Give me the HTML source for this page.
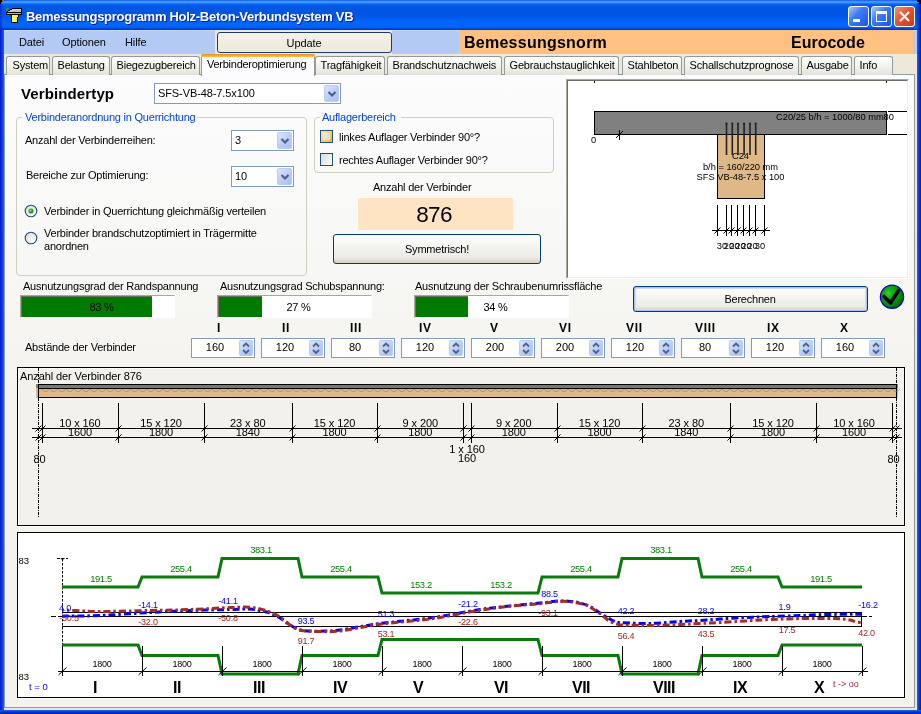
<!DOCTYPE html>
<html><head><meta charset="utf-8"><style>
html,body{margin:0;padding:0}
body{width:921px;height:714px;overflow:hidden;position:relative;background:#0a3ad8;font-family:"Liberation Sans", sans-serif;}
div{box-sizing:border-box}
.a{position:absolute}
.t{position:absolute;white-space:nowrap;font-family:"Liberation Sans", sans-serif;}
.tab{position:absolute;top:56px;height:19px;border:1px solid #919b9c;border-bottom:none;border-radius:3px 3px 0 0;background:linear-gradient(#ffffff,#f0f0ea 60%,#e3e2da);}
.grp{position:absolute;border:1px solid #d0d0bf;border-radius:4px;}
.combo{position:absolute;border:1px solid #7f9db9;background:#fff;}
.ddb{position:absolute;border-radius:2px;background:linear-gradient(135deg,#dce6fc,#b7cbf7 60%,#a8bdf5);border:1px solid #bccbf2}
.xpbtn{position:absolute;border:1px solid #003c74;border-radius:3px;background:linear-gradient(#ffffff,#f4f4f0 40%,#ecebe6 80%,#d6d0c5);}
.spin{position:absolute;width:64px;height:20px;border:1px solid #7f9db9;background:#fff;}
.sb{position:absolute;left:47px;top:1px;width:14px;height:16px;border-radius:2px;background:linear-gradient(135deg,#dce6fc,#b7cbf7 60%,#a8bdf5);border:1px solid #bccbf2}
.pb{position:absolute;border-top:2px solid #aca899;border-left:2px solid #aca899;border-right:1px solid #f1efe2;border-bottom:1px solid #f1efe2;}
</style></head><body><div style="position:absolute;left:0;top:0;width:921px;height:714px;overflow:hidden;will-change:transform">
<div class="a" style="left:0;top:0;width:921px;height:30px;border-radius:7px 7px 0 0;background:linear-gradient(#0040d8 0px,#3d95ff 1px,#3d95ff 2.5px,#0a68f2 4px,#0058e6 6px,#0055e3 12px,#0058e8 17px,#0064f8 21px,#0066ff 26px,#0058ea 28px,#0036c8 29.5px)"></div>
<svg class="a" style="left:0;top:0" width="30" height="30" shape-rendering="crispEdges">
<rect x="0" y="0" width="4" height="1" fill="#000"/><rect x="0" y="1" width="2" height="1" fill="#000"/><rect x="0" y="2" width="1" height="2" fill="#000"/>
<rect x="2" y="0" width="2" height="1" fill="#8a7020"/>
<rect x="6" y="8" width="3" height="4" fill="#1a8a7a"/>
<rect x="6" y="14" width="3" height="1" fill="#1a8a7a"/>
<rect x="12" y="8" width="10" height="1" fill="#000"/>
<rect x="21" y="8" width="1" height="7" fill="#000"/>
<rect x="10" y="9" width="2" height="1" fill="#000"/>
<rect x="8" y="10" width="2" height="1" fill="#000"/>
<rect x="7" y="11" width="1" height="1" fill="#000"/>
<rect x="12" y="9" width="9" height="1" fill="#d4d0c8"/>
<rect x="10" y="10" width="11" height="1" fill="#ccc8c0"/>
<rect x="8" y="11" width="13" height="1" fill="#c4c0b8"/>
<rect x="6" y="12" width="16" height="1" fill="#000"/>
<rect x="7" y="13" width="14" height="1" fill="#bcb8b0"/>
<rect x="6" y="13" width="1" height="1" fill="#000"/>
<rect x="6" y="14" width="16" height="1" fill="#000"/>
<rect x="11" y="15" width="8" height="2" fill="#000"/>
<rect x="11" y="17" width="7" height="6" fill="#000"/>
<rect x="12" y="15" width="6" height="2" fill="#ffff33"/>
<rect x="12" y="17" width="5" height="5" fill="#ffff33"/>
</svg>
<div class="t" style="left:26px;top:9px;font-size:13px;line-height:16px;font-weight:bold;color:#fff;letter-spacing:-0.28px;text-shadow:1px 1px 0 #0a1f9c">Bemessungsprogramm Holz-Beton-Verbundsystem VB</div>
<div class="a" style="left:848px;top:6px;width:21px;height:21px;border:1px solid #fff;border-radius:3px;background:linear-gradient(135deg,#ffffff -30%,#3d7cf5 40%,#1c55e2 100%)"></div>
<div class="a" style="left:853px;top:19px;width:7px;height:3px;background:#fff"></div>
<div class="a" style="left:871px;top:6px;width:21px;height:21px;border:1px solid #fff;border-radius:3px;background:linear-gradient(135deg,#ffffff -30%,#3d7cf5 40%,#1c55e2 100%)"></div>
<div class="a" style="left:876px;top:11px;width:11px;height:11px;border:1px solid #fff;border-top:3px solid #fff"></div>
<div class="a" style="left:894px;top:6px;width:21px;height:21px;border:1px solid #fff;border-radius:3px;background:linear-gradient(135deg,#ffb6a3 -30%,#e5542f 45%,#c83c14 100%)"></div>
<svg class="a" style="left:894px;top:6px" width="21" height="21"><path d="M6 6 L15 15 M15 6 L6 15" stroke="#fff" stroke-width="2.2"/></svg>
<div class="a" style="left:916px;top:3px;width:5px;height:27px;background:linear-gradient(90deg,rgba(0,60,230,0),#0040d8 40%,#0028b0 80%,#001a90)"></div>
<div class="a" style="left:0px;top:4px;width:3px;height:26px;background:linear-gradient(90deg,#0030c8,rgba(0,80,230,0))"></div>
<div class="a" style="left:917px;top:0;width:4px;height:2px;background:#000"></div><div class="a" style="left:919px;top:2px;width:2px;height:2px;background:#000"></div>
<div class="a" style="left:0;top:30px;width:4px;height:684px;background:linear-gradient(90deg,#0019cf,#0831d9 40%,#166aee)"></div>
<div class="a" style="left:917px;top:30px;width:4px;height:684px;background:linear-gradient(90deg,#166aee,#0831d9 60%,#001ea0)"></div>
<div class="a" style="left:0;top:710px;width:921px;height:4px;background:linear-gradient(#166aee,#0831d9 50%,#001ea0)"></div>
<div class="a" style="left:4px;top:30px;width:913px;height:24px;background:#b3cbf4;border-top:1px solid #c8daf8"></div>
<div class="t" style="left:19px;top:37px;font-size:11px;line-height:11px;height:11px;color:#000;font-weight:normal;letter-spacing:-0.1px;">Datei</div>
<div class="t" style="left:62px;top:37px;font-size:11px;line-height:11px;height:11px;color:#000;font-weight:normal;letter-spacing:-0.1px;">Optionen</div>
<div class="t" style="left:125px;top:37px;font-size:11px;line-height:11px;height:11px;color:#000;font-weight:normal;letter-spacing:-0.1px;">Hilfe</div>
<div class="a" style="left:215px;top:30px;width:177px;height:24px;background:#ece9d8"></div>
<div class="xpbtn" style="left:217px;top:32px;width:175px;height:21px;border-color:#1a3b74;background:linear-gradient(#f5f3ea,#ece9d8)"></div>
<div class="t" style="left:204.0px;width:200px;text-align:center;top:38px;font-size:11px;line-height:11px;height:11px;color:#000;font-weight:normal;letter-spacing:-0.1px;">Update</div>
<div class="a" style="left:459px;top:30px;width:454px;height:24px;background:#ffc080"></div>
<div class="t" style="left:464px;top:35px;font-size:16px;line-height:16px;height:16px;color:#000;font-weight:bold;letter-spacing:0.25px;">Bemessungsnorm</div>
<div class="t" style="left:791px;top:35px;font-size:16px;line-height:16px;height:16px;color:#000;font-weight:bold;letter-spacing:0px;">Eurocode</div>
<div class="a" style="left:4px;top:54px;width:913px;height:656px;background:#ece9d8"></div>
<div class="a" style="left:4px;top:74px;width:911px;height:634px;border:1px solid #919b9c;border-left-color:#919b9c;background:linear-gradient(#fcfcfe 0px,#f9f9f8 120px,#f4f3ee 320px,#f3f2ed 634px)"></div>
<div class="tab" style="left:6px;width:44px"></div>
<div class="t" style="left:12.5px;top:60px;font-size:11px;line-height:11px;height:11px;color:#000;font-weight:normal;letter-spacing:-0.18px;">System</div>
<div class="tab" style="left:52px;width:58px"></div>
<div class="t" style="left:57.5px;top:60px;font-size:11px;line-height:11px;height:11px;color:#000;font-weight:normal;letter-spacing:-0.18px;">Belastung</div>
<div class="tab" style="left:111px;width:89px"></div>
<div class="t" style="left:116.5px;top:60px;font-size:11px;line-height:11px;height:11px;color:#000;font-weight:normal;letter-spacing:-0.18px;">Biegezugbereich</div>
<div class="tab" style="left:315px;width:70px"></div>
<div class="t" style="left:320.5px;top:60px;font-size:11px;line-height:11px;height:11px;color:#000;font-weight:normal;letter-spacing:-0.18px;">Tragfähigkeit</div>
<div class="tab" style="left:387px;width:115px"></div>
<div class="t" style="left:392.5px;top:60px;font-size:11px;line-height:11px;height:11px;color:#000;font-weight:normal;letter-spacing:-0.18px;">Brandschutznachweis</div>
<div class="tab" style="left:504px;width:115px"></div>
<div class="t" style="left:509.5px;top:60px;font-size:11px;line-height:11px;height:11px;color:#000;font-weight:normal;letter-spacing:-0.18px;">Gebrauchstauglichkeit</div>
<div class="tab" style="left:622px;width:60px"></div>
<div class="t" style="left:627.5px;top:60px;font-size:11px;line-height:11px;height:11px;color:#000;font-weight:normal;letter-spacing:-0.18px;">Stahlbeton</div>
<div class="tab" style="left:684px;width:115px"></div>
<div class="t" style="left:689.5px;top:60px;font-size:11px;line-height:11px;height:11px;color:#000;font-weight:normal;letter-spacing:-0.18px;">Schallschutzprognose</div>
<div class="tab" style="left:801px;width:51px"></div>
<div class="t" style="left:806.5px;top:60px;font-size:11px;line-height:11px;height:11px;color:#000;font-weight:normal;letter-spacing:-0.18px;">Ausgabe</div>
<div class="tab" style="left:854px;width:39px"></div>
<div class="t" style="left:859.5px;top:60px;font-size:11px;line-height:11px;height:11px;color:#000;font-weight:normal;letter-spacing:-0.18px;">Info</div>
<div class="a" style="left:201px;top:54px;width:114px;height:22px;border:1px solid #919b9c;border-bottom:none;border-radius:3px 3px 0 0;background:#fcfcfe"></div>
<div class="a" style="left:201px;top:54px;width:114px;height:3px;border-radius:3px 3px 0 0;background:linear-gradient(#e68b2c,#ffc73c)"></div>
<div class="t" style="left:207px;top:59px;font-size:11px;line-height:11px;height:11px;color:#000;font-weight:normal;letter-spacing:-0.26px;">Verbinderoptimierung</div>
<div class="t" style="left:21px;top:85.5px;font-size:15px;line-height:15px;height:15px;color:#000;font-weight:bold;letter-spacing:0.12px;">Verbindertyp</div>
<div class="combo" style="left:154px;top:83px;width:187px;height:21px"></div>
<div class="ddb" style="left:324px;top:85px;width:15px;height:17px"></div>
<svg class="a" style="left:326.5px;top:89.5px" width="10" height="8"><path d="M1.5 2 L5 5.5 L8.5 2" fill="none" stroke="#4d6185" stroke-width="2.2"/></svg>
<div class="t" style="left:158px;top:88px;font-size:11px;line-height:11px;height:11px;color:#000;font-weight:normal;letter-spacing:-0.1px;">SFS-VB-48-7.5x100</div>
<div class="grp" style="left:16px;top:117px;width:291px;height:159px"></div>
<div class="a" style="left:22px;top:110px;width:175px;height:12px;background:#fbfbfc"></div>
<div class="t" style="left:25px;top:112px;font-size:11px;line-height:11px;height:11px;color:#0046d5;font-weight:normal;letter-spacing:-0.22px;">Verbinderanordnung in Querrichtung</div>
<div class="t" style="left:25px;top:135px;font-size:11px;line-height:11px;height:11px;color:#000;font-weight:normal;letter-spacing:-0.22px;">Anzahl der Verbinderreihen:</div>
<div class="combo" style="left:231px;top:130px;width:63px;height:21px"></div>
<div class="ddb" style="left:277px;top:132px;width:15px;height:17px"></div>
<svg class="a" style="left:279.5px;top:136.5px" width="10" height="8"><path d="M1.5 2 L5 5.5 L8.5 2" fill="none" stroke="#4d6185" stroke-width="2.2"/></svg>
<div class="t" style="left:235px;top:135px;font-size:11px;line-height:11px;height:11px;color:#000;font-weight:normal;letter-spacing:-0.1px;">3</div>
<div class="t" style="left:26px;top:170px;font-size:11px;line-height:11px;height:11px;color:#000;font-weight:normal;letter-spacing:-0.22px;">Bereiche zur Optimierung:</div>
<div class="combo" style="left:231px;top:166px;width:63px;height:21px"></div>
<div class="ddb" style="left:277px;top:168px;width:15px;height:17px"></div>
<svg class="a" style="left:279.5px;top:172.5px" width="10" height="8"><path d="M1.5 2 L5 5.5 L8.5 2" fill="none" stroke="#4d6185" stroke-width="2.2"/></svg>
<div class="t" style="left:235px;top:171px;font-size:11px;line-height:11px;height:11px;color:#000;font-weight:normal;letter-spacing:-0.1px;">10</div>
<svg class="a" style="left:24px;top:204px" width="14" height="14"><defs><radialGradient id="rg31211" cx="0.7" cy="0.7" r="0.8"><stop offset="0" stop-color="#fff"/><stop offset="1" stop-color="#dcdcd6"/></radialGradient></defs><circle cx="7" cy="7" r="5.8" fill="url(#rg31211)" stroke="#1c5180" stroke-width="1.1"/><circle cx="7" cy="7" r="2.6" fill="#21a121"/><circle cx="6.4" cy="6.4" r="1" fill="#8fe58f"/></svg>
<div class="t" style="left:44px;top:206px;font-size:11px;line-height:11px;height:11px;color:#000;font-weight:normal;letter-spacing:-0.22px;">Verbinder in Querrichtung gleichmäßig verteilen</div>
<svg class="a" style="left:24px;top:231px" width="14" height="14"><defs><radialGradient id="rg31238" cx="0.7" cy="0.7" r="0.8"><stop offset="0" stop-color="#fff"/><stop offset="1" stop-color="#dcdcd6"/></radialGradient></defs><circle cx="7" cy="7" r="5.8" fill="url(#rg31238)" stroke="#1c5180" stroke-width="1.1"/></svg>
<div class="t" style="left:44px;top:227.5px;font-size:11px;line-height:11px;height:11px;color:#000;font-weight:normal;letter-spacing:-0.22px;">Verbinder brandschutzoptimiert in Trägermitte</div>
<div class="t" style="left:44px;top:240.5px;font-size:11px;line-height:11px;height:11px;color:#000;font-weight:normal;letter-spacing:-0.22px;">anordnen</div>
<div class="grp" style="left:314px;top:117px;width:240px;height:56px"></div>
<div class="a" style="left:320px;top:110px;width:81px;height:12px;background:#fbfbfc"></div>
<div class="t" style="left:322px;top:112px;font-size:11px;line-height:11px;height:11px;color:#0046d5;font-weight:normal;letter-spacing:-0.22px;">Auflagerbereich</div>
<div class="a" style="left:320px;top:130px;width:13px;height:13px;border:1px solid #1c5180;background:linear-gradient(135deg,#fde6a8,#f8b33f)"></div>
<div class="a" style="left:323px;top:133px;width:7px;height:7px;background:linear-gradient(135deg,#e8e8e4,#dcdcd6)"></div>
<div class="t" style="left:339px;top:132px;font-size:11px;line-height:11px;height:11px;color:#000;font-weight:normal;letter-spacing:-0.22px;">linkes Auflager Verbinder 90°?</div>
<div class="a" style="left:320px;top:153px;width:13px;height:13px;border:1px solid #1c5180;background:linear-gradient(135deg,#dcdcd7,#fbfbfa)"></div>
<div class="t" style="left:339px;top:155px;font-size:11px;line-height:11px;height:11px;color:#000;font-weight:normal;letter-spacing:-0.22px;">rechtes Auflager Verbinder 90°?</div>
<div class="t" style="left:373px;top:182px;font-size:11px;line-height:11px;height:11px;color:#000;font-weight:normal;letter-spacing:-0.22px;">Anzahl der Verbinder</div>
<div class="a" style="left:358px;top:198px;width:155px;height:32px;background:#ffe4c4"></div>
<div class="t" style="left:334.0px;width:200px;text-align:center;top:204px;font-size:22.5px;line-height:22.5px;height:22.5px;color:#000;font-weight:normal;letter-spacing:-0.6px;">876</div>
<div class="xpbtn" style="left:333px;top:234px;width:208px;height:30px"></div>
<div class="t" style="left:337.0px;width:200px;text-align:center;top:244px;font-size:11px;line-height:11px;height:11px;color:#000;font-weight:normal;letter-spacing:-0.22px;">Symmetrisch!</div>
<div class="t" style="left:23px;top:281px;font-size:11px;line-height:11px;height:11px;color:#000;font-weight:normal;letter-spacing:-0.22px;">Ausnutzungsgrad der Randspannung</div>
<div class="a" style="left:20px;top:295px;width:155px;height:23px;background:#fff;border-top:1px solid #aca899;border-left:1px solid #aca899;border-right:1px solid #fff;border-bottom:1px solid #fff"></div>
<div class="a" style="left:21px;top:296px;width:131px;height:21px;background:#007a00;border-top:1px solid #716f64;border-left:1px solid #716f64"></div>
<div class="t" style="left:1.5px;width:200px;text-align:center;top:302px;font-size:11px;line-height:11px;height:11px;color:#000;font-weight:normal;letter-spacing:-0.22px;">83 %</div>
<div class="t" style="left:220px;top:281px;font-size:11px;line-height:11px;height:11px;color:#000;font-weight:normal;letter-spacing:-0.22px;">Ausnutzungsgrad Schubspannung:</div>
<div class="a" style="left:217px;top:295px;width:155px;height:23px;background:#fff;border-top:1px solid #aca899;border-left:1px solid #aca899;border-right:1px solid #fff;border-bottom:1px solid #fff"></div>
<div class="a" style="left:218px;top:296px;width:44px;height:21px;background:#007a00;border-top:1px solid #716f64;border-left:1px solid #716f64"></div>
<div class="t" style="left:198.5px;width:200px;text-align:center;top:302px;font-size:11px;line-height:11px;height:11px;color:#000;font-weight:normal;letter-spacing:-0.22px;">27 %</div>
<div class="t" style="left:415px;top:281px;font-size:11px;line-height:11px;height:11px;color:#000;font-weight:normal;letter-spacing:-0.22px;">Ausnutzung der Schraubenumrissfläche</div>
<div class="a" style="left:414px;top:295px;width:155px;height:23px;background:#fff;border-top:1px solid #aca899;border-left:1px solid #aca899;border-right:1px solid #fff;border-bottom:1px solid #fff"></div>
<div class="a" style="left:415px;top:296px;width:53px;height:21px;background:#007a00;border-top:1px solid #716f64;border-left:1px solid #716f64"></div>
<div class="t" style="left:395.5px;width:200px;text-align:center;top:302px;font-size:11px;line-height:11px;height:11px;color:#000;font-weight:normal;letter-spacing:-0.22px;">34 %</div>
<div class="xpbtn" style="left:633px;top:286px;width:235px;height:26px;box-shadow:inset 0 0 0 1px #a9c2f0, inset 0 0 0 2px #cfdcf5"></div>
<div class="t" style="left:650.0px;width:200px;text-align:center;top:294px;font-size:11px;line-height:11px;height:11px;color:#000;font-weight:normal;letter-spacing:-0.22px;">Berechnen</div>
<svg class="a" style="left:878px;top:283px" width="28" height="28" viewBox="878 283 28 28">
<defs><radialGradient id="chk" cx="0.35" cy="0.35" r="0.75"><stop offset="0" stop-color="#3fd03f"/><stop offset="0.25" stop-color="#10b010"/><stop offset="0.7" stop-color="#008a00"/><stop offset="1" stop-color="#005800"/></radialGradient></defs>
<circle cx="892" cy="296.8" r="11.6" fill="url(#chk)" stroke="#0000d0" stroke-width="1.3"/>
<path d="M884 296.5 L890.5 303 L898.5 290.5" fill="none" stroke="#000" stroke-width="3.6" stroke-linejoin="round" stroke-linecap="round"/>
</svg>
<div class="t" style="left:25px;top:342px;font-size:11px;line-height:11px;height:11px;color:#000;font-weight:normal;letter-spacing:-0.22px;">Abstände der Verbinder</div>
<div class="t" style="left:217px;top:322px;font-size:12px;line-height:12px;height:12px;color:#000;font-weight:bold;letter-spacing:0.7px;">I</div>
<div class="spin" style="left:191px;top:338px"></div>
<div class="a" style="left:239px;top:340px;width:14px;height:16px;border-radius:2px;background:linear-gradient(135deg,#dce6fc,#b7cbf7 60%,#a8bdf5);border:1px solid #bccbf2"></div>
<svg class="a" style="left:240px;top:341px" width="12" height="14"><path d="M3 5.5 L6 2.5 L9 5.5 M3 9 L6 12 L9 9" fill="none" stroke="#4d6185" stroke-width="1.8"/></svg>
<div class="t" style="left:115.0px;width:200px;text-align:center;top:342px;font-size:11px;line-height:11px;height:11px;color:#000;font-weight:normal;letter-spacing:0px;">160</div>
<div class="t" style="left:282px;top:322px;font-size:12px;line-height:12px;height:12px;color:#000;font-weight:bold;letter-spacing:0.7px;">II</div>
<div class="spin" style="left:261px;top:338px"></div>
<div class="a" style="left:309px;top:340px;width:14px;height:16px;border-radius:2px;background:linear-gradient(135deg,#dce6fc,#b7cbf7 60%,#a8bdf5);border:1px solid #bccbf2"></div>
<svg class="a" style="left:310px;top:341px" width="12" height="14"><path d="M3 5.5 L6 2.5 L9 5.5 M3 9 L6 12 L9 9" fill="none" stroke="#4d6185" stroke-width="1.8"/></svg>
<div class="t" style="left:185.0px;width:200px;text-align:center;top:342px;font-size:11px;line-height:11px;height:11px;color:#000;font-weight:normal;letter-spacing:0px;">120</div>
<div class="t" style="left:350px;top:322px;font-size:12px;line-height:12px;height:12px;color:#000;font-weight:bold;letter-spacing:0.7px;">III</div>
<div class="spin" style="left:331px;top:338px"></div>
<div class="a" style="left:379px;top:340px;width:14px;height:16px;border-radius:2px;background:linear-gradient(135deg,#dce6fc,#b7cbf7 60%,#a8bdf5);border:1px solid #bccbf2"></div>
<svg class="a" style="left:380px;top:341px" width="12" height="14"><path d="M3 5.5 L6 2.5 L9 5.5 M3 9 L6 12 L9 9" fill="none" stroke="#4d6185" stroke-width="1.8"/></svg>
<div class="t" style="left:255.0px;width:200px;text-align:center;top:342px;font-size:11px;line-height:11px;height:11px;color:#000;font-weight:normal;letter-spacing:0px;">80</div>
<div class="t" style="left:419px;top:322px;font-size:12px;line-height:12px;height:12px;color:#000;font-weight:bold;letter-spacing:0.7px;">IV</div>
<div class="spin" style="left:401px;top:338px"></div>
<div class="a" style="left:449px;top:340px;width:14px;height:16px;border-radius:2px;background:linear-gradient(135deg,#dce6fc,#b7cbf7 60%,#a8bdf5);border:1px solid #bccbf2"></div>
<svg class="a" style="left:450px;top:341px" width="12" height="14"><path d="M3 5.5 L6 2.5 L9 5.5 M3 9 L6 12 L9 9" fill="none" stroke="#4d6185" stroke-width="1.8"/></svg>
<div class="t" style="left:325.0px;width:200px;text-align:center;top:342px;font-size:11px;line-height:11px;height:11px;color:#000;font-weight:normal;letter-spacing:0px;">120</div>
<div class="t" style="left:490px;top:322px;font-size:12px;line-height:12px;height:12px;color:#000;font-weight:bold;letter-spacing:0.7px;">V</div>
<div class="spin" style="left:471px;top:338px"></div>
<div class="a" style="left:519px;top:340px;width:14px;height:16px;border-radius:2px;background:linear-gradient(135deg,#dce6fc,#b7cbf7 60%,#a8bdf5);border:1px solid #bccbf2"></div>
<svg class="a" style="left:520px;top:341px" width="12" height="14"><path d="M3 5.5 L6 2.5 L9 5.5 M3 9 L6 12 L9 9" fill="none" stroke="#4d6185" stroke-width="1.8"/></svg>
<div class="t" style="left:395.0px;width:200px;text-align:center;top:342px;font-size:11px;line-height:11px;height:11px;color:#000;font-weight:normal;letter-spacing:0px;">200</div>
<div class="t" style="left:559px;top:322px;font-size:12px;line-height:12px;height:12px;color:#000;font-weight:bold;letter-spacing:0.7px;">VI</div>
<div class="spin" style="left:541px;top:338px"></div>
<div class="a" style="left:589px;top:340px;width:14px;height:16px;border-radius:2px;background:linear-gradient(135deg,#dce6fc,#b7cbf7 60%,#a8bdf5);border:1px solid #bccbf2"></div>
<svg class="a" style="left:590px;top:341px" width="12" height="14"><path d="M3 5.5 L6 2.5 L9 5.5 M3 9 L6 12 L9 9" fill="none" stroke="#4d6185" stroke-width="1.8"/></svg>
<div class="t" style="left:465.0px;width:200px;text-align:center;top:342px;font-size:11px;line-height:11px;height:11px;color:#000;font-weight:normal;letter-spacing:0px;">200</div>
<div class="t" style="left:626px;top:322px;font-size:12px;line-height:12px;height:12px;color:#000;font-weight:bold;letter-spacing:0.7px;">VII</div>
<div class="spin" style="left:611px;top:338px"></div>
<div class="a" style="left:659px;top:340px;width:14px;height:16px;border-radius:2px;background:linear-gradient(135deg,#dce6fc,#b7cbf7 60%,#a8bdf5);border:1px solid #bccbf2"></div>
<svg class="a" style="left:660px;top:341px" width="12" height="14"><path d="M3 5.5 L6 2.5 L9 5.5 M3 9 L6 12 L9 9" fill="none" stroke="#4d6185" stroke-width="1.8"/></svg>
<div class="t" style="left:535.0px;width:200px;text-align:center;top:342px;font-size:11px;line-height:11px;height:11px;color:#000;font-weight:normal;letter-spacing:0px;">120</div>
<div class="t" style="left:695px;top:322px;font-size:12px;line-height:12px;height:12px;color:#000;font-weight:bold;letter-spacing:0.7px;">VIII</div>
<div class="spin" style="left:681px;top:338px"></div>
<div class="a" style="left:729px;top:340px;width:14px;height:16px;border-radius:2px;background:linear-gradient(135deg,#dce6fc,#b7cbf7 60%,#a8bdf5);border:1px solid #bccbf2"></div>
<svg class="a" style="left:730px;top:341px" width="12" height="14"><path d="M3 5.5 L6 2.5 L9 5.5 M3 9 L6 12 L9 9" fill="none" stroke="#4d6185" stroke-width="1.8"/></svg>
<div class="t" style="left:605.0px;width:200px;text-align:center;top:342px;font-size:11px;line-height:11px;height:11px;color:#000;font-weight:normal;letter-spacing:0px;">80</div>
<div class="t" style="left:767px;top:322px;font-size:12px;line-height:12px;height:12px;color:#000;font-weight:bold;letter-spacing:0.7px;">IX</div>
<div class="spin" style="left:751px;top:338px"></div>
<div class="a" style="left:799px;top:340px;width:14px;height:16px;border-radius:2px;background:linear-gradient(135deg,#dce6fc,#b7cbf7 60%,#a8bdf5);border:1px solid #bccbf2"></div>
<svg class="a" style="left:800px;top:341px" width="12" height="14"><path d="M3 5.5 L6 2.5 L9 5.5 M3 9 L6 12 L9 9" fill="none" stroke="#4d6185" stroke-width="1.8"/></svg>
<div class="t" style="left:675.0px;width:200px;text-align:center;top:342px;font-size:11px;line-height:11px;height:11px;color:#000;font-weight:normal;letter-spacing:0px;">120</div>
<div class="t" style="left:840px;top:322px;font-size:12px;line-height:12px;height:12px;color:#000;font-weight:bold;letter-spacing:0.7px;">X</div>
<div class="spin" style="left:821px;top:338px"></div>
<div class="a" style="left:869px;top:340px;width:14px;height:16px;border-radius:2px;background:linear-gradient(135deg,#dce6fc,#b7cbf7 60%,#a8bdf5);border:1px solid #bccbf2"></div>
<svg class="a" style="left:870px;top:341px" width="12" height="14"><path d="M3 5.5 L6 2.5 L9 5.5 M3 9 L6 12 L9 9" fill="none" stroke="#4d6185" stroke-width="1.8"/></svg>
<div class="t" style="left:745.0px;width:200px;text-align:center;top:342px;font-size:11px;line-height:11px;height:11px;color:#000;font-weight:normal;letter-spacing:0px;">160</div>
<div class="a" style="left:566px;top:79px;width:343px;height:200px;background:#fff;border-top:1px solid #aca899;border-left:1px solid #aca899;border-right:1px solid #fff;border-bottom:1px solid #fff"></div>
<div class="a" style="left:567px;top:80px;width:341px;height:198px;border-top:1px solid #716f64;border-left:1px solid #716f64;border-right:1px solid #f1efe2;border-bottom:1px solid #f1efe2"></div>
<div class="a" style="left:16px;top:366px;width:890px;height:161px;border-right:1px solid #fff;border-bottom:1px solid #fff"></div>
<div class="a" style="left:17px;top:367px;width:888px;height:159px;background:#f2f1ec;border:1px solid #000"></div>
<div class="a" style="left:18px;top:368px;width:886px;height:157px;border-top:1px solid #fff;border-left:1px solid #fff"></div>
<div class="a" style="left:16px;top:531px;width:890px;height:168px;border-right:1px solid #fff;border-bottom:1px solid #fff"></div>
<div class="a" style="left:17px;top:532px;width:888px;height:166px;background:#fff;border:1px solid #000"></div>
<svg class="a" style="left:0;top:0" width="921" height="714" font-family="'Liberation Sans', sans-serif"><g shape-rendering="crispEdges">
<line x1="594.5" y1="81" x2="594.5" y2="83" stroke="#000" stroke-width="1" />
<line x1="886.5" y1="81" x2="886.5" y2="83" stroke="#000" stroke-width="1" />
<rect x="594.5" y="111.5" width="292" height="23" fill="#808080" stroke="#000" stroke-width="1"/>
<line x1="888" y1="111.5" x2="907" y2="111.5" stroke="#000" stroke-width="1" />
<line x1="888" y1="134.5" x2="907" y2="134.5" stroke="#000" stroke-width="1" />
<rect x="717.5" y="134.5" width="47" height="64" fill="#deb887" stroke="#000" stroke-width="1"/>
</g>
<line x1="726.5" y1="123" x2="726.5" y2="155" stroke="#222" stroke-width="1.6" />
<circle cx="726.5" cy="123.5" r="1.1" fill="#222"/>
<line x1="732.3" y1="123" x2="732.3" y2="155" stroke="#222" stroke-width="1.6" />
<circle cx="732.3" cy="123.5" r="1.1" fill="#222"/>
<line x1="738" y1="123" x2="738" y2="155" stroke="#222" stroke-width="1.6" />
<circle cx="738" cy="123.5" r="1.1" fill="#222"/>
<line x1="744.1" y1="123" x2="744.1" y2="155" stroke="#222" stroke-width="1.6" />
<circle cx="744.1" cy="123.5" r="1.1" fill="#222"/>
<line x1="750" y1="123" x2="750" y2="155" stroke="#222" stroke-width="1.6" />
<circle cx="750" cy="123.5" r="1.1" fill="#222"/>
<line x1="755.7" y1="123" x2="755.7" y2="155" stroke="#222" stroke-width="1.6" />
<circle cx="755.7" cy="123.5" r="1.1" fill="#222"/>
<line x1="619.5" y1="130" x2="619.5" y2="140" stroke="#000" stroke-width="1" />
<line x1="616" y1="138" x2="623" y2="131" stroke="#000" stroke-width="1" />
<text x="591" y="143" font-size="9.3" fill="#000" text-anchor="start" letter-spacing="0" >0</text>
<text x="776" y="120" font-size="9.3" fill="#000" text-anchor="start" letter-spacing="0" >C20/25 b/h = 1000/80 mm</text>
<text x="883.5" y="120" font-size="9.3" fill="#000" text-anchor="start" letter-spacing="0" >80</text>
<text x="740.5" y="159" font-size="9.3" fill="#000" text-anchor="middle" letter-spacing="0" >C24</text>
<text x="740.5" y="170" font-size="9.3" fill="#000" text-anchor="middle" letter-spacing="0" >b/h = 160/220 mm</text>
<text x="740.5" y="180" font-size="9.3" fill="#000" text-anchor="middle" letter-spacing="0" >SFS VB-48-7.5 x 100</text>
<g shape-rendering="crispEdges">
<line x1="717.5" y1="205" x2="717.5" y2="236" stroke="#000" stroke-width="1" />
<line x1="726.5" y1="205" x2="726.5" y2="236" stroke="#000" stroke-width="1" />
<line x1="731.5" y1="205" x2="731.5" y2="236" stroke="#000" stroke-width="1" />
<line x1="737.5" y1="205" x2="737.5" y2="236" stroke="#000" stroke-width="1" />
<line x1="743.5" y1="205" x2="743.5" y2="236" stroke="#000" stroke-width="1" />
<line x1="749.5" y1="205" x2="749.5" y2="236" stroke="#000" stroke-width="1" />
<line x1="755.5" y1="205" x2="755.5" y2="236" stroke="#000" stroke-width="1" />
<line x1="764.5" y1="205" x2="764.5" y2="236" stroke="#000" stroke-width="1" />
<line x1="712" y1="230.5" x2="770" y2="230.5" stroke="#000" stroke-width="1" />
</g>
<line x1="714.5" y1="233.5" x2="720.5" y2="227.5" stroke="#000" stroke-width="1" />
<line x1="723.5" y1="233.5" x2="729.5" y2="227.5" stroke="#000" stroke-width="1" />
<line x1="728.5" y1="233.5" x2="734.5" y2="227.5" stroke="#000" stroke-width="1" />
<line x1="734.5" y1="233.5" x2="740.5" y2="227.5" stroke="#000" stroke-width="1" />
<line x1="740.5" y1="233.5" x2="746.5" y2="227.5" stroke="#000" stroke-width="1" />
<line x1="746.5" y1="233.5" x2="752.5" y2="227.5" stroke="#000" stroke-width="1" />
<line x1="752.5" y1="233.5" x2="758.5" y2="227.5" stroke="#000" stroke-width="1" />
<line x1="761.5" y1="233.5" x2="767.5" y2="227.5" stroke="#000" stroke-width="1" />
<text x="722.0" y="249" font-size="9.3" fill="#000" text-anchor="middle" letter-spacing="0" >30</text>
<text x="729.0" y="249" font-size="9.3" fill="#000" text-anchor="middle" letter-spacing="0" >20</text>
<text x="734.5" y="249" font-size="9.3" fill="#000" text-anchor="middle" letter-spacing="0" >20</text>
<text x="740.5" y="249" font-size="9.3" fill="#000" text-anchor="middle" letter-spacing="0" >20</text>
<text x="746.5" y="249" font-size="9.3" fill="#000" text-anchor="middle" letter-spacing="0" >20</text>
<text x="752.5" y="249" font-size="9.3" fill="#000" text-anchor="middle" letter-spacing="0" >20</text>
<text x="760.0" y="249" font-size="9.3" fill="#000" text-anchor="middle" letter-spacing="0" >30</text>
<text x="20" y="379.5" font-size="11" fill="#000" text-anchor="start" letter-spacing="-0.1" >Anzahl der Verbinder 876</text>
<rect x="36" y="384" width="862" height="4" fill="#808080"/>
<rect x="36" y="388" width="862" height="10" fill="#deb887"/>
<g shape-rendering="crispEdges">
<line x1="38" y1="384.5" x2="896" y2="384.5" stroke="#000" stroke-width="1" />
<line x1="38" y1="397.5" x2="896" y2="397.5" stroke="#000" stroke-width="1" />
<line x1="38.5" y1="384" x2="38.5" y2="398" stroke="#000" stroke-width="1" />
<line x1="896.5" y1="384" x2="896.5" y2="398" stroke="#000" stroke-width="1" />
</g>
<path d="M41.5 389 q4 5 8.1 0 M49.6 389 q4 5 8.1 0 M57.7 389 q4 5 8.1 0 M65.8 389 q4 5 8.1 0 M73.89999999999999 389 q4 5 8.1 0 M81.99999999999999 389 q4 5 8.1 0 M90.09999999999998 389 q4 5 8.1 0 M98.19999999999997 389 q4 5 8.1 0 M106.29999999999997 389 q4 5 8.1 0 M114.39999999999996 389 q4 5 8.1 0 M122.49999999999996 389 q4 5 8.1 0 M130.59999999999997 389 q4 5 8.1 0 M138.69999999999996 389 q4 5 8.1 0 M146.79999999999995 389 q4 5 8.1 0 M154.89999999999995 389 q4 5 8.1 0 M162.99999999999994 389 q4 5 8.1 0 M171.09999999999994 389 q4 5 8.1 0 M179.19999999999993 389 q4 5 8.1 0 M187.29999999999993 389 q4 5 8.1 0 M195.39999999999992 389 q4 5 8.1 0 M203.49999999999991 389 q4 5 8.1 0 M211.5999999999999 389 q4 5 8.1 0 M219.6999999999999 389 q4 5 8.1 0 M227.7999999999999 389 q4 5 8.1 0 M235.8999999999999 389 q4 5 8.1 0 M243.9999999999999 389 q4 5 8.1 0 M252.09999999999988 389 q4 5 8.1 0 M260.1999999999999 389 q4 5 8.1 0 M268.2999999999999 389 q4 5 8.1 0 M276.3999999999999 389 q4 5 8.1 0 M284.49999999999994 389 q4 5 8.1 0 M292.59999999999997 389 q4 5 8.1 0 M300.7 389 q4 5 8.1 0 M308.8 389 q4 5 8.1 0 M316.90000000000003 389 q4 5 8.1 0 M325.00000000000006 389 q4 5 8.1 0 M333.1000000000001 389 q4 5 8.1 0 M341.2000000000001 389 q4 5 8.1 0 M349.3000000000001 389 q4 5 8.1 0 M357.40000000000015 389 q4 5 8.1 0 M365.50000000000017 389 q4 5 8.1 0 M373.6000000000002 389 q4 5 8.1 0 M381.7000000000002 389 q4 5 8.1 0 M389.80000000000024 389 q4 5 8.1 0 M397.90000000000026 389 q4 5 8.1 0 M406.0000000000003 389 q4 5 8.1 0 M414.1000000000003 389 q4 5 8.1 0 M422.20000000000033 389 q4 5 8.1 0 M430.30000000000035 389 q4 5 8.1 0 M438.4000000000004 389 q4 5 8.1 0 M446.5000000000004 389 q4 5 8.1 0 M454.6000000000004 389 q4 5 8.1 0 M462.70000000000044 389 q4 5 8.1 0 M470.80000000000047 389 q4 5 8.1 0 M478.9000000000005 389 q4 5 8.1 0 M487.0000000000005 389 q4 5 8.1 0 M495.10000000000053 389 q4 5 8.1 0 M503.20000000000056 389 q4 5 8.1 0 M511.3000000000006 389 q4 5 8.1 0 M519.4000000000005 389 q4 5 8.1 0 M527.5000000000006 389 q4 5 8.1 0 M535.6000000000006 389 q4 5 8.1 0 M543.7000000000006 389 q4 5 8.1 0 M551.8000000000006 389 q4 5 8.1 0 M559.9000000000007 389 q4 5 8.1 0 M568.0000000000007 389 q4 5 8.1 0 M576.1000000000007 389 q4 5 8.1 0 M584.2000000000007 389 q4 5 8.1 0 M592.3000000000008 389 q4 5 8.1 0 M600.4000000000008 389 q4 5 8.1 0 M608.5000000000008 389 q4 5 8.1 0 M616.6000000000008 389 q4 5 8.1 0 M624.7000000000008 389 q4 5 8.1 0 M632.8000000000009 389 q4 5 8.1 0 M640.9000000000009 389 q4 5 8.1 0 M649.0000000000009 389 q4 5 8.1 0 M657.1000000000009 389 q4 5 8.1 0 M665.200000000001 389 q4 5 8.1 0 M673.300000000001 389 q4 5 8.1 0 M681.400000000001 389 q4 5 8.1 0 M689.500000000001 389 q4 5 8.1 0 M697.600000000001 389 q4 5 8.1 0 M705.7000000000011 389 q4 5 8.1 0 M713.8000000000011 389 q4 5 8.1 0 M721.9000000000011 389 q4 5 8.1 0 M730.0000000000011 389 q4 5 8.1 0 M738.1000000000012 389 q4 5 8.1 0 M746.2000000000012 389 q4 5 8.1 0 M754.3000000000012 389 q4 5 8.1 0 M762.4000000000012 389 q4 5 8.1 0 M770.5000000000013 389 q4 5 8.1 0 M778.6000000000013 389 q4 5 8.1 0 M786.7000000000013 389 q4 5 8.1 0 M794.8000000000013 389 q4 5 8.1 0 M802.9000000000013 389 q4 5 8.1 0 M811.0000000000014 389 q4 5 8.1 0 M819.1000000000014 389 q4 5 8.1 0 M827.2000000000014 389 q4 5 8.1 0 M835.3000000000014 389 q4 5 8.1 0 M843.4000000000015 389 q4 5 8.1 0 M851.5000000000015 389 q4 5 8.1 0 M859.6000000000015 389 q4 5 8.1 0 M867.7000000000015 389 q4 5 8.1 0 M875.8000000000015 389 q4 5 8.1 0 M883.9000000000016 389 q4 5 8.1 0 M892.0000000000016 389 q4 5 8.1 0" fill="none" stroke="#8a7a66" stroke-width="0.8" opacity="0.8"/>
<path d="M40 387 l2 -1.5 l2 1.5 M44 387 l2 -1.5 l2 1.5 M48 387 l2 -1.5 l2 1.5 M52 387 l2 -1.5 l2 1.5 M56 387 l2 -1.5 l2 1.5 M60 387 l2 -1.5 l2 1.5 M64 387 l2 -1.5 l2 1.5 M68 387 l2 -1.5 l2 1.5 M72 387 l2 -1.5 l2 1.5 M76 387 l2 -1.5 l2 1.5 M80 387 l2 -1.5 l2 1.5 M84 387 l2 -1.5 l2 1.5 M88 387 l2 -1.5 l2 1.5 M92 387 l2 -1.5 l2 1.5 M96 387 l2 -1.5 l2 1.5 M100 387 l2 -1.5 l2 1.5 M104 387 l2 -1.5 l2 1.5 M108 387 l2 -1.5 l2 1.5 M112 387 l2 -1.5 l2 1.5 M116 387 l2 -1.5 l2 1.5 M120 387 l2 -1.5 l2 1.5 M124 387 l2 -1.5 l2 1.5 M128 387 l2 -1.5 l2 1.5 M132 387 l2 -1.5 l2 1.5 M136 387 l2 -1.5 l2 1.5 M140 387 l2 -1.5 l2 1.5 M144 387 l2 -1.5 l2 1.5 M148 387 l2 -1.5 l2 1.5 M152 387 l2 -1.5 l2 1.5 M156 387 l2 -1.5 l2 1.5 M160 387 l2 -1.5 l2 1.5 M164 387 l2 -1.5 l2 1.5 M168 387 l2 -1.5 l2 1.5 M172 387 l2 -1.5 l2 1.5 M176 387 l2 -1.5 l2 1.5 M180 387 l2 -1.5 l2 1.5 M184 387 l2 -1.5 l2 1.5 M188 387 l2 -1.5 l2 1.5 M192 387 l2 -1.5 l2 1.5 M196 387 l2 -1.5 l2 1.5 M200 387 l2 -1.5 l2 1.5 M204 387 l2 -1.5 l2 1.5 M208 387 l2 -1.5 l2 1.5 M212 387 l2 -1.5 l2 1.5 M216 387 l2 -1.5 l2 1.5 M220 387 l2 -1.5 l2 1.5 M224 387 l2 -1.5 l2 1.5 M228 387 l2 -1.5 l2 1.5 M232 387 l2 -1.5 l2 1.5 M236 387 l2 -1.5 l2 1.5 M240 387 l2 -1.5 l2 1.5 M244 387 l2 -1.5 l2 1.5 M248 387 l2 -1.5 l2 1.5 M252 387 l2 -1.5 l2 1.5 M256 387 l2 -1.5 l2 1.5 M260 387 l2 -1.5 l2 1.5 M264 387 l2 -1.5 l2 1.5 M268 387 l2 -1.5 l2 1.5 M272 387 l2 -1.5 l2 1.5 M276 387 l2 -1.5 l2 1.5 M280 387 l2 -1.5 l2 1.5 M284 387 l2 -1.5 l2 1.5 M288 387 l2 -1.5 l2 1.5 M292 387 l2 -1.5 l2 1.5 M296 387 l2 -1.5 l2 1.5 M300 387 l2 -1.5 l2 1.5 M304 387 l2 -1.5 l2 1.5 M308 387 l2 -1.5 l2 1.5 M312 387 l2 -1.5 l2 1.5 M316 387 l2 -1.5 l2 1.5 M320 387 l2 -1.5 l2 1.5 M324 387 l2 -1.5 l2 1.5 M328 387 l2 -1.5 l2 1.5 M332 387 l2 -1.5 l2 1.5 M336 387 l2 -1.5 l2 1.5 M340 387 l2 -1.5 l2 1.5 M344 387 l2 -1.5 l2 1.5 M348 387 l2 -1.5 l2 1.5 M352 387 l2 -1.5 l2 1.5 M356 387 l2 -1.5 l2 1.5 M360 387 l2 -1.5 l2 1.5 M364 387 l2 -1.5 l2 1.5 M368 387 l2 -1.5 l2 1.5 M372 387 l2 -1.5 l2 1.5 M376 387 l2 -1.5 l2 1.5 M380 387 l2 -1.5 l2 1.5 M384 387 l2 -1.5 l2 1.5 M388 387 l2 -1.5 l2 1.5 M392 387 l2 -1.5 l2 1.5 M396 387 l2 -1.5 l2 1.5 M400 387 l2 -1.5 l2 1.5 M404 387 l2 -1.5 l2 1.5 M408 387 l2 -1.5 l2 1.5 M412 387 l2 -1.5 l2 1.5 M416 387 l2 -1.5 l2 1.5 M420 387 l2 -1.5 l2 1.5 M424 387 l2 -1.5 l2 1.5 M428 387 l2 -1.5 l2 1.5 M432 387 l2 -1.5 l2 1.5 M436 387 l2 -1.5 l2 1.5 M440 387 l2 -1.5 l2 1.5 M444 387 l2 -1.5 l2 1.5 M448 387 l2 -1.5 l2 1.5 M452 387 l2 -1.5 l2 1.5 M456 387 l2 -1.5 l2 1.5 M460 387 l2 -1.5 l2 1.5 M464 387 l2 -1.5 l2 1.5 M468 387 l2 -1.5 l2 1.5 M472 387 l2 -1.5 l2 1.5 M476 387 l2 -1.5 l2 1.5 M480 387 l2 -1.5 l2 1.5 M484 387 l2 -1.5 l2 1.5 M488 387 l2 -1.5 l2 1.5 M492 387 l2 -1.5 l2 1.5 M496 387 l2 -1.5 l2 1.5 M500 387 l2 -1.5 l2 1.5 M504 387 l2 -1.5 l2 1.5 M508 387 l2 -1.5 l2 1.5 M512 387 l2 -1.5 l2 1.5 M516 387 l2 -1.5 l2 1.5 M520 387 l2 -1.5 l2 1.5 M524 387 l2 -1.5 l2 1.5 M528 387 l2 -1.5 l2 1.5 M532 387 l2 -1.5 l2 1.5 M536 387 l2 -1.5 l2 1.5 M540 387 l2 -1.5 l2 1.5 M544 387 l2 -1.5 l2 1.5 M548 387 l2 -1.5 l2 1.5 M552 387 l2 -1.5 l2 1.5 M556 387 l2 -1.5 l2 1.5 M560 387 l2 -1.5 l2 1.5 M564 387 l2 -1.5 l2 1.5 M568 387 l2 -1.5 l2 1.5 M572 387 l2 -1.5 l2 1.5 M576 387 l2 -1.5 l2 1.5 M580 387 l2 -1.5 l2 1.5 M584 387 l2 -1.5 l2 1.5 M588 387 l2 -1.5 l2 1.5 M592 387 l2 -1.5 l2 1.5 M596 387 l2 -1.5 l2 1.5 M600 387 l2 -1.5 l2 1.5 M604 387 l2 -1.5 l2 1.5 M608 387 l2 -1.5 l2 1.5 M612 387 l2 -1.5 l2 1.5 M616 387 l2 -1.5 l2 1.5 M620 387 l2 -1.5 l2 1.5 M624 387 l2 -1.5 l2 1.5 M628 387 l2 -1.5 l2 1.5 M632 387 l2 -1.5 l2 1.5 M636 387 l2 -1.5 l2 1.5 M640 387 l2 -1.5 l2 1.5 M644 387 l2 -1.5 l2 1.5 M648 387 l2 -1.5 l2 1.5 M652 387 l2 -1.5 l2 1.5 M656 387 l2 -1.5 l2 1.5 M660 387 l2 -1.5 l2 1.5 M664 387 l2 -1.5 l2 1.5 M668 387 l2 -1.5 l2 1.5 M672 387 l2 -1.5 l2 1.5 M676 387 l2 -1.5 l2 1.5 M680 387 l2 -1.5 l2 1.5 M684 387 l2 -1.5 l2 1.5 M688 387 l2 -1.5 l2 1.5 M692 387 l2 -1.5 l2 1.5 M696 387 l2 -1.5 l2 1.5 M700 387 l2 -1.5 l2 1.5 M704 387 l2 -1.5 l2 1.5 M708 387 l2 -1.5 l2 1.5 M712 387 l2 -1.5 l2 1.5 M716 387 l2 -1.5 l2 1.5 M720 387 l2 -1.5 l2 1.5 M724 387 l2 -1.5 l2 1.5 M728 387 l2 -1.5 l2 1.5 M732 387 l2 -1.5 l2 1.5 M736 387 l2 -1.5 l2 1.5 M740 387 l2 -1.5 l2 1.5 M744 387 l2 -1.5 l2 1.5 M748 387 l2 -1.5 l2 1.5 M752 387 l2 -1.5 l2 1.5 M756 387 l2 -1.5 l2 1.5 M760 387 l2 -1.5 l2 1.5 M764 387 l2 -1.5 l2 1.5 M768 387 l2 -1.5 l2 1.5 M772 387 l2 -1.5 l2 1.5 M776 387 l2 -1.5 l2 1.5 M780 387 l2 -1.5 l2 1.5 M784 387 l2 -1.5 l2 1.5 M788 387 l2 -1.5 l2 1.5 M792 387 l2 -1.5 l2 1.5 M796 387 l2 -1.5 l2 1.5 M800 387 l2 -1.5 l2 1.5 M804 387 l2 -1.5 l2 1.5 M808 387 l2 -1.5 l2 1.5 M812 387 l2 -1.5 l2 1.5 M816 387 l2 -1.5 l2 1.5 M820 387 l2 -1.5 l2 1.5 M824 387 l2 -1.5 l2 1.5 M828 387 l2 -1.5 l2 1.5 M832 387 l2 -1.5 l2 1.5 M836 387 l2 -1.5 l2 1.5 M840 387 l2 -1.5 l2 1.5 M844 387 l2 -1.5 l2 1.5 M848 387 l2 -1.5 l2 1.5 M852 387 l2 -1.5 l2 1.5 M856 387 l2 -1.5 l2 1.5 M860 387 l2 -1.5 l2 1.5 M864 387 l2 -1.5 l2 1.5 M868 387 l2 -1.5 l2 1.5 M872 387 l2 -1.5 l2 1.5 M876 387 l2 -1.5 l2 1.5 M880 387 l2 -1.5 l2 1.5 M884 387 l2 -1.5 l2 1.5 M888 387 l2 -1.5 l2 1.5 M892 387 l2 -1.5 l2 1.5" fill="none" stroke="#555" stroke-width="0.6" opacity="0.7"/>
<g shape-rendering="crispEdges">
<line x1="38" y1="388.5" x2="896" y2="388.5" stroke="#000" stroke-width="1" />
</g>
<line x1="38.5" y1="368" x2="38.5" y2="517" stroke="#000" stroke-width="1" stroke-dasharray="3 1 1 1"/>
<line x1="896.5" y1="368" x2="896.5" y2="517" stroke="#000" stroke-width="1" stroke-dasharray="3 1 1 1"/>
<g shape-rendering="crispEdges">
<line x1="32" y1="428.5" x2="902" y2="428.5" stroke="#000" stroke-width="1" />
<line x1="32" y1="437.5" x2="902" y2="437.5" stroke="#000" stroke-width="1" />
<line x1="42.5" y1="403" x2="42.5" y2="443" stroke="#000" stroke-width="1" />
<line x1="118.5" y1="403" x2="118.5" y2="443" stroke="#000" stroke-width="1" />
<line x1="204.5" y1="403" x2="204.5" y2="443" stroke="#000" stroke-width="1" />
<line x1="292.5" y1="403" x2="292.5" y2="443" stroke="#000" stroke-width="1" />
<line x1="377.5" y1="403" x2="377.5" y2="443" stroke="#000" stroke-width="1" />
<line x1="463.5" y1="403" x2="463.5" y2="443" stroke="#000" stroke-width="1" />
<line x1="471.5" y1="403" x2="471.5" y2="443" stroke="#000" stroke-width="1" />
<line x1="557.5" y1="403" x2="557.5" y2="443" stroke="#000" stroke-width="1" />
<line x1="642.5" y1="403" x2="642.5" y2="443" stroke="#000" stroke-width="1" />
<line x1="730.5" y1="403" x2="730.5" y2="443" stroke="#000" stroke-width="1" />
<line x1="816.5" y1="403" x2="816.5" y2="443" stroke="#000" stroke-width="1" />
<line x1="892.5" y1="403" x2="892.5" y2="443" stroke="#000" stroke-width="1" />
</g>
<line x1="35.5" y1="431.5" x2="41.5" y2="425.5" stroke="#000" stroke-width="1" />
<line x1="35.5" y1="440.5" x2="41.5" y2="434.5" stroke="#000" stroke-width="1" />
<line x1="39.5" y1="431.5" x2="45.5" y2="425.5" stroke="#000" stroke-width="1" />
<line x1="39.5" y1="440.5" x2="45.5" y2="434.5" stroke="#000" stroke-width="1" />
<line x1="115.5" y1="431.5" x2="121.5" y2="425.5" stroke="#000" stroke-width="1" />
<line x1="115.5" y1="440.5" x2="121.5" y2="434.5" stroke="#000" stroke-width="1" />
<line x1="201.5" y1="431.5" x2="207.5" y2="425.5" stroke="#000" stroke-width="1" />
<line x1="201.5" y1="440.5" x2="207.5" y2="434.5" stroke="#000" stroke-width="1" />
<line x1="289.5" y1="431.5" x2="295.5" y2="425.5" stroke="#000" stroke-width="1" />
<line x1="289.5" y1="440.5" x2="295.5" y2="434.5" stroke="#000" stroke-width="1" />
<line x1="374.5" y1="431.5" x2="380.5" y2="425.5" stroke="#000" stroke-width="1" />
<line x1="374.5" y1="440.5" x2="380.5" y2="434.5" stroke="#000" stroke-width="1" />
<line x1="460.5" y1="431.5" x2="466.5" y2="425.5" stroke="#000" stroke-width="1" />
<line x1="460.5" y1="440.5" x2="466.5" y2="434.5" stroke="#000" stroke-width="1" />
<line x1="468.5" y1="431.5" x2="474.5" y2="425.5" stroke="#000" stroke-width="1" />
<line x1="468.5" y1="440.5" x2="474.5" y2="434.5" stroke="#000" stroke-width="1" />
<line x1="554.5" y1="431.5" x2="560.5" y2="425.5" stroke="#000" stroke-width="1" />
<line x1="554.5" y1="440.5" x2="560.5" y2="434.5" stroke="#000" stroke-width="1" />
<line x1="639.5" y1="431.5" x2="645.5" y2="425.5" stroke="#000" stroke-width="1" />
<line x1="639.5" y1="440.5" x2="645.5" y2="434.5" stroke="#000" stroke-width="1" />
<line x1="727.5" y1="431.5" x2="733.5" y2="425.5" stroke="#000" stroke-width="1" />
<line x1="727.5" y1="440.5" x2="733.5" y2="434.5" stroke="#000" stroke-width="1" />
<line x1="813.5" y1="431.5" x2="819.5" y2="425.5" stroke="#000" stroke-width="1" />
<line x1="813.5" y1="440.5" x2="819.5" y2="434.5" stroke="#000" stroke-width="1" />
<line x1="889.5" y1="431.5" x2="895.5" y2="425.5" stroke="#000" stroke-width="1" />
<line x1="889.5" y1="440.5" x2="895.5" y2="434.5" stroke="#000" stroke-width="1" />
<line x1="893.5" y1="431.5" x2="899.5" y2="425.5" stroke="#000" stroke-width="1" />
<line x1="893.5" y1="440.5" x2="899.5" y2="434.5" stroke="#000" stroke-width="1" />
<text x="79.94666666666666" y="427" font-size="11" fill="#000" text-anchor="middle" letter-spacing="-0.1" >10 x 160</text>
<text x="79.94666666666666" y="436" font-size="11" fill="#000" text-anchor="middle" letter-spacing="-0.1" >1600</text>
<text x="160.98" y="427" font-size="11" fill="#000" text-anchor="middle" letter-spacing="-0.1" >15 x 120</text>
<text x="160.98" y="436" font-size="11" fill="#000" text-anchor="middle" letter-spacing="-0.1" >1800</text>
<text x="247.73333333333335" y="427" font-size="11" fill="#000" text-anchor="middle" letter-spacing="-0.1" >23 x 80</text>
<text x="247.73333333333335" y="436" font-size="11" fill="#000" text-anchor="middle" letter-spacing="-0.1" >1840</text>
<text x="334.4866666666667" y="427" font-size="11" fill="#000" text-anchor="middle" letter-spacing="-0.1" >15 x 120</text>
<text x="334.4866666666667" y="436" font-size="11" fill="#000" text-anchor="middle" letter-spacing="-0.1" >1800</text>
<text x="420.28666666666675" y="427" font-size="11" fill="#000" text-anchor="middle" letter-spacing="-0.1" >9 x 200</text>
<text x="420.28666666666675" y="436" font-size="11" fill="#000" text-anchor="middle" letter-spacing="-0.1" >1800</text>
<text x="513.7133333333334" y="427" font-size="11" fill="#000" text-anchor="middle" letter-spacing="-0.1" >9 x 200</text>
<text x="513.7133333333334" y="436" font-size="11" fill="#000" text-anchor="middle" letter-spacing="-0.1" >1800</text>
<text x="599.5133333333334" y="427" font-size="11" fill="#000" text-anchor="middle" letter-spacing="-0.1" >15 x 120</text>
<text x="599.5133333333334" y="436" font-size="11" fill="#000" text-anchor="middle" letter-spacing="-0.1" >1800</text>
<text x="686.2666666666668" y="427" font-size="11" fill="#000" text-anchor="middle" letter-spacing="-0.1" >23 x 80</text>
<text x="686.2666666666668" y="436" font-size="11" fill="#000" text-anchor="middle" letter-spacing="-0.1" >1840</text>
<text x="773.0200000000001" y="427" font-size="11" fill="#000" text-anchor="middle" letter-spacing="-0.1" >15 x 120</text>
<text x="773.0200000000001" y="436" font-size="11" fill="#000" text-anchor="middle" letter-spacing="-0.1" >1800</text>
<text x="854.0533333333334" y="427" font-size="11" fill="#000" text-anchor="middle" letter-spacing="-0.1" >10 x 160</text>
<text x="854.0533333333334" y="436" font-size="11" fill="#000" text-anchor="middle" letter-spacing="-0.1" >1600</text>
<text x="467.00000000000006" y="453" font-size="11" fill="#000" text-anchor="middle" letter-spacing="-0.1" >1 x 160</text>
<text x="467.00000000000006" y="462" font-size="11" fill="#000" text-anchor="middle" letter-spacing="-0.1" >160</text>
<text x="39.5" y="463" font-size="11" fill="#000" text-anchor="middle" letter-spacing="-0.1" >80</text>
<text x="893.5" y="463" font-size="11" fill="#000" text-anchor="middle" letter-spacing="-0.1" >80</text>
<text x="18.5" y="564" font-size="9.5" fill="#000" text-anchor="start" letter-spacing="0" >83</text>
<text x="18.5" y="680" font-size="9.5" fill="#000" text-anchor="start" letter-spacing="0" >83</text>
<text x="29" y="690" font-size="9.5" fill="#0000ff" text-anchor="start" letter-spacing="0" >t = 0</text>
<text x="833" y="687" font-size="9" fill="#a52a2a" text-anchor="start" letter-spacing="0" >t -&gt; oo</text>
<line x1="62.5" y1="559" x2="62.5" y2="675" stroke="#000" stroke-width="1" stroke-dasharray="2.5 1.5"/>
<line x1="57" y1="558.5" x2="68" y2="558.5" stroke="#000" stroke-width="1" stroke-dasharray="3 1.5"/>
<path d="M60.5 558 L64.5 558 L62.5 560.5 Z" fill="#000"/>
<g shape-rendering="crispEdges">
<rect x="62.5" y="616.5" width="799" height="10" fill="#fcf7f4"/>
<line x1="62" y1="612.5" x2="862" y2="612.5" stroke="#000" stroke-width="1" />
<line x1="62" y1="626.5" x2="862" y2="626.5" stroke="#000" stroke-width="1" />
<line x1="861.5" y1="612" x2="861.5" y2="627" stroke="#000" stroke-width="1" />
</g>
<line x1="51" y1="616.5" x2="62" y2="616.5" stroke="#000" stroke-width="1" stroke-dasharray="5 2"/>
<line x1="862" y1="616.5" x2="872" y2="616.5" stroke="#000" stroke-width="1" stroke-dasharray="5 2"/>
<g shape-rendering="crispEdges">
<line x1="62" y1="616.5" x2="862" y2="616.5" stroke="#000" stroke-width="1" />
</g>
<polyline points="62,587 138,587 142,577 218,577 222,558.5 298,558.5 302,577 378,577 382,593 458,593 462,593 538,593 542,577 618,577 622,558.5 698,558.5 702,577 778,577 782,587 862,587" fill="none" stroke="#0a7a0a" stroke-width="3"/>
<polyline points="62,645 138,645 142,655.5 218,655.5 222,674 298,674 302,655.5 378,655.5 382,639.5 458,639.5 462,639.5 538,639.5 542,655.5 618,655.5 622,674 698,674 702,655.5 778,655.5 782,645 862,645" fill="none" stroke="#0a7a0a" stroke-width="3"/>
<text x="101" y="581.5" font-size="9.4" fill="#008000" text-anchor="middle" letter-spacing="-0.35" >191.5</text>
<text x="181" y="571.5" font-size="9.4" fill="#008000" text-anchor="middle" letter-spacing="-0.35" >255.4</text>
<text x="261" y="553.0" font-size="9.4" fill="#008000" text-anchor="middle" letter-spacing="-0.35" >383.1</text>
<text x="341" y="571.5" font-size="9.4" fill="#008000" text-anchor="middle" letter-spacing="-0.35" >255.4</text>
<text x="421" y="587.5" font-size="9.4" fill="#008000" text-anchor="middle" letter-spacing="-0.35" >153.2</text>
<text x="501" y="587.5" font-size="9.4" fill="#008000" text-anchor="middle" letter-spacing="-0.35" >153.2</text>
<text x="581" y="571.5" font-size="9.4" fill="#008000" text-anchor="middle" letter-spacing="-0.35" >255.4</text>
<text x="661" y="553.0" font-size="9.4" fill="#008000" text-anchor="middle" letter-spacing="-0.35" >383.1</text>
<text x="741" y="571.5" font-size="9.4" fill="#008000" text-anchor="middle" letter-spacing="-0.35" >255.4</text>
<text x="821" y="581.5" font-size="9.4" fill="#008000" text-anchor="middle" letter-spacing="-0.35" >191.5</text>
<g shape-rendering="crispEdges">
<line x1="58" y1="671.5" x2="868" y2="671.5" stroke="#000" stroke-width="1" />
<line x1="62.5" y1="646" x2="62.5" y2="676" stroke="#000" stroke-width="1" />
<line x1="142.5" y1="646" x2="142.5" y2="676" stroke="#000" stroke-width="1" />
<line x1="222.5" y1="646" x2="222.5" y2="676" stroke="#000" stroke-width="1" />
<line x1="302.5" y1="646" x2="302.5" y2="676" stroke="#000" stroke-width="1" />
<line x1="382.5" y1="646" x2="382.5" y2="676" stroke="#000" stroke-width="1" />
<line x1="462.5" y1="646" x2="462.5" y2="676" stroke="#000" stroke-width="1" />
<line x1="542.5" y1="646" x2="542.5" y2="676" stroke="#000" stroke-width="1" />
<line x1="622.5" y1="646" x2="622.5" y2="676" stroke="#000" stroke-width="1" />
<line x1="702.5" y1="646" x2="702.5" y2="676" stroke="#000" stroke-width="1" />
<line x1="782.5" y1="646" x2="782.5" y2="676" stroke="#000" stroke-width="1" />
<line x1="862.5" y1="646" x2="862.5" y2="676" stroke="#000" stroke-width="1" />
</g>
<line x1="58.5" y1="675" x2="66.5" y2="667.5" stroke="#000" stroke-width="1" />
<line x1="138.5" y1="675" x2="146.5" y2="667.5" stroke="#000" stroke-width="1" />
<line x1="218.5" y1="675" x2="226.5" y2="667.5" stroke="#000" stroke-width="1" />
<line x1="298.5" y1="675" x2="306.5" y2="667.5" stroke="#000" stroke-width="1" />
<line x1="378.5" y1="675" x2="386.5" y2="667.5" stroke="#000" stroke-width="1" />
<line x1="458.5" y1="675" x2="466.5" y2="667.5" stroke="#000" stroke-width="1" />
<line x1="538.5" y1="675" x2="546.5" y2="667.5" stroke="#000" stroke-width="1" />
<line x1="618.5" y1="675" x2="626.5" y2="667.5" stroke="#000" stroke-width="1" />
<line x1="698.5" y1="675" x2="706.5" y2="667.5" stroke="#000" stroke-width="1" />
<line x1="778.5" y1="675" x2="786.5" y2="667.5" stroke="#000" stroke-width="1" />
<line x1="858.5" y1="675" x2="866.5" y2="667.5" stroke="#000" stroke-width="1" />
<text x="102" y="667" font-size="9" fill="#000" text-anchor="middle" letter-spacing="-0.3" >1800</text>
<text x="182" y="667" font-size="9" fill="#000" text-anchor="middle" letter-spacing="-0.3" >1800</text>
<text x="262" y="667" font-size="9" fill="#000" text-anchor="middle" letter-spacing="-0.3" >1800</text>
<text x="342" y="667" font-size="9" fill="#000" text-anchor="middle" letter-spacing="-0.3" >1800</text>
<text x="422" y="667" font-size="9" fill="#000" text-anchor="middle" letter-spacing="-0.3" >1800</text>
<text x="502" y="667" font-size="9" fill="#000" text-anchor="middle" letter-spacing="-0.3" >1800</text>
<text x="582" y="667" font-size="9" fill="#000" text-anchor="middle" letter-spacing="-0.3" >1800</text>
<text x="662" y="667" font-size="9" fill="#000" text-anchor="middle" letter-spacing="-0.3" >1800</text>
<text x="742" y="667" font-size="9" fill="#000" text-anchor="middle" letter-spacing="-0.3" >1800</text>
<text x="822" y="667" font-size="9" fill="#000" text-anchor="middle" letter-spacing="-0.3" >1800</text>
<text x="95" y="693" font-size="16" fill="#000" text-anchor="middle" letter-spacing="-0.5" font-weight="bold">I</text>
<text x="177" y="693" font-size="16" fill="#000" text-anchor="middle" letter-spacing="-0.5" font-weight="bold">II</text>
<text x="259" y="693" font-size="16" fill="#000" text-anchor="middle" letter-spacing="-0.5" font-weight="bold">III</text>
<text x="340" y="693" font-size="16" fill="#000" text-anchor="middle" letter-spacing="-0.5" font-weight="bold">IV</text>
<text x="418" y="693" font-size="16" fill="#000" text-anchor="middle" letter-spacing="-0.5" font-weight="bold">V</text>
<text x="501" y="693" font-size="16" fill="#000" text-anchor="middle" letter-spacing="-0.5" font-weight="bold">VI</text>
<text x="581" y="693" font-size="16" fill="#000" text-anchor="middle" letter-spacing="-0.5" font-weight="bold">VII</text>
<text x="664" y="693" font-size="16" fill="#000" text-anchor="middle" letter-spacing="-0.5" font-weight="bold">VIII</text>
<text x="740" y="693" font-size="16" fill="#000" text-anchor="middle" letter-spacing="-0.5" font-weight="bold">IX</text>
<text x="819" y="693" font-size="16" fill="#000" text-anchor="middle" letter-spacing="-0.5" font-weight="bold">X</text>
<path d="M62,616 C64.2,616.0 68.7,616.1 75,616 C81.3,615.9 87.5,616.1 100,615.5 C112.5,614.9 135.0,613.3 150,612.5 C165.0,611.7 176.7,611.0 190,610.5 C203.3,610.0 220.0,609.8 230,609.5 C240.0,609.2 244.7,608.8 250,609 C255.3,609.2 258.7,610.3 262,611 C265.3,611.7 267.0,611.8 270,613 C273.0,614.2 276.7,616.0 280,618 C283.3,620.0 286.7,623.0 290,625 C293.3,627.0 296.7,629.0 300,630 C303.3,631.0 305.8,630.8 310,631 C314.2,631.2 320.0,631.2 325,631 C330.0,630.8 330.8,631.2 340,630 C349.2,628.8 365.0,625.5 380,623.5 C395.0,621.5 413.3,620.3 430,618 C446.7,615.7 466.7,611.5 480,609.5 C493.3,607.5 500.0,607.1 510,606 C520.0,604.9 531.7,603.8 540,603 C548.3,602.2 554.7,601.2 560,601 C565.3,600.8 568.7,601.2 572,601.5 C575.3,601.8 577.0,602.2 580,603 C583.0,603.8 586.7,604.8 590,606.5 C593.3,608.2 596.7,610.9 600,613 C603.3,615.1 607.5,617.6 610,619 C612.5,620.4 613.0,620.9 615,621.5 C617.0,622.1 616.2,622.4 622,622.7 C627.8,623.0 640.3,623.7 650,623.5 C659.7,623.3 671.7,621.9 680,621.4 C688.3,620.9 693.3,620.9 700,620.5 C706.7,620.1 712.5,619.6 720,619.1 C727.5,618.6 736.7,617.9 745,617.5 C753.3,617.1 760.8,616.8 770,616.5 C779.2,616.2 790.8,615.9 800,615.6 C809.2,615.3 814.7,614.7 825,614.5 C835.3,614.3 855.8,614.3 862,614.3" fill="none" stroke="#0000ff" stroke-width="3" stroke-dasharray="7 3 2.5 3"/>
<path d="M62,610 C64.2,610.1 68.7,610.2 75,610.5 C81.3,610.8 87.5,611.5 100,611.5 C112.5,611.5 135.0,610.8 150,610.5 C165.0,610.2 176.7,610.0 190,609.5 C203.3,609.0 220.0,608.0 230,607.6 C240.0,607.2 244.7,606.9 250,607.2 C255.3,607.5 258.7,608.7 262,609.5 C265.3,610.3 267.0,610.8 270,612 C273.0,613.2 276.7,614.8 280,617 C283.3,619.2 287.2,623.0 290,625 C292.8,627.0 294.5,628.0 297,629 C299.5,630.0 301.2,630.6 305,631 C308.8,631.4 314.2,631.5 320,631.5 C325.8,631.5 330.0,632.2 340,631 C350.0,629.8 365.0,626.2 380,624.2 C395.0,622.2 413.3,621.3 430,619 C446.7,616.7 466.7,612.3 480,610.2 C493.3,608.1 500.0,607.3 510,606.2 C520.0,605.1 531.7,604.5 540,603.7 C548.3,602.9 554.7,601.7 560,601.4 C565.3,601.1 568.7,601.6 572,602 C575.3,602.4 577.5,603.0 580,603.5 C582.5,604.0 584.5,604.2 587,605.3 C589.5,606.4 592.8,608.8 595,610.2 C597.2,611.6 598.3,612.4 600,613.6 C601.7,614.8 603.3,616.2 605,617.5 C606.7,618.8 607.5,620.2 610,621.4 C612.5,622.6 615.8,624.1 620,624.8 C624.2,625.4 630.0,625.2 635,625.3 C640.0,625.4 642.5,625.6 650,625.5 C657.5,625.4 671.7,624.8 680,624.5 C688.3,624.2 693.3,623.8 700,623.5 C706.7,623.2 712.5,622.9 720,622.5 C727.5,622.1 736.7,621.5 745,621 C753.3,620.5 760.8,619.9 770,619.5 C779.2,619.1 789.2,618.8 800,618.6 C810.8,618.4 826.7,618.3 835,618.5 C843.3,618.7 846.5,619.4 850,620 C853.5,620.6 854.0,621.6 856,622 C858.0,622.4 861.0,622.4 862,622.5" fill="none" stroke="#a52a2a" stroke-width="3" stroke-dasharray="7 3 2.5 3" stroke-dashoffset="5"/>
<text x="65" y="610.5" font-size="9" fill="#0000ff" text-anchor="middle" letter-spacing="-0.2" >4.0</text>
<text x="148" y="608" font-size="9" fill="#0000ff" text-anchor="middle" letter-spacing="-0.2" >-14.1</text>
<text x="228" y="604" font-size="9" fill="#0000ff" text-anchor="middle" letter-spacing="-0.2" >-41.1</text>
<text x="306" y="624" font-size="9" fill="#0000ff" text-anchor="middle" letter-spacing="-0.2" >93.5</text>
<text x="386" y="617" font-size="9" fill="#0000ff" text-anchor="middle" letter-spacing="-0.2" >51.3</text>
<text x="468" y="606.5" font-size="9" fill="#0000ff" text-anchor="middle" letter-spacing="-0.2" >-21.2</text>
<text x="549.5" y="596.5" font-size="9" fill="#0000ff" text-anchor="middle" letter-spacing="-0.2" >88.5</text>
<text x="626" y="614" font-size="9" fill="#0000ff" text-anchor="middle" letter-spacing="-0.2" >42.2</text>
<text x="706" y="614" font-size="9" fill="#0000ff" text-anchor="middle" letter-spacing="-0.2" >28.2</text>
<text x="784.5" y="610" font-size="9" fill="#0000ff" text-anchor="middle" letter-spacing="-0.2" >1.9</text>
<text x="868" y="608" font-size="9" fill="#0000ff" text-anchor="middle" letter-spacing="-0.2" >-16.2</text>
<text x="69" y="621" font-size="9" fill="#a02828" text-anchor="middle" letter-spacing="-0.2" >-50.5</text>
<text x="148" y="625" font-size="9" fill="#a02828" text-anchor="middle" letter-spacing="-0.2" >-32.0</text>
<text x="228" y="621" font-size="9" fill="#a02828" text-anchor="middle" letter-spacing="-0.2" >-50.8</text>
<text x="306" y="644" font-size="9" fill="#a02828" text-anchor="middle" letter-spacing="-0.2" >91.7</text>
<text x="386" y="637" font-size="9" fill="#a02828" text-anchor="middle" letter-spacing="-0.2" >53.1</text>
<text x="468" y="625" font-size="9" fill="#a02828" text-anchor="middle" letter-spacing="-0.2" >-22.6</text>
<text x="548" y="616" font-size="9" fill="#a02828" text-anchor="middle" letter-spacing="-0.2" >-93.1</text>
<text x="626" y="639" font-size="9" fill="#a02828" text-anchor="middle" letter-spacing="-0.2" >56.4</text>
<text x="706" y="637" font-size="9" fill="#a02828" text-anchor="middle" letter-spacing="-0.2" >43.5</text>
<text x="787" y="633" font-size="9" fill="#a02828" text-anchor="middle" letter-spacing="-0.2" >17.5</text>
<text x="866.5" y="635.5" font-size="9" fill="#a02828" text-anchor="middle" letter-spacing="-0.2" >42.0</text></svg>
</div></body></html>
